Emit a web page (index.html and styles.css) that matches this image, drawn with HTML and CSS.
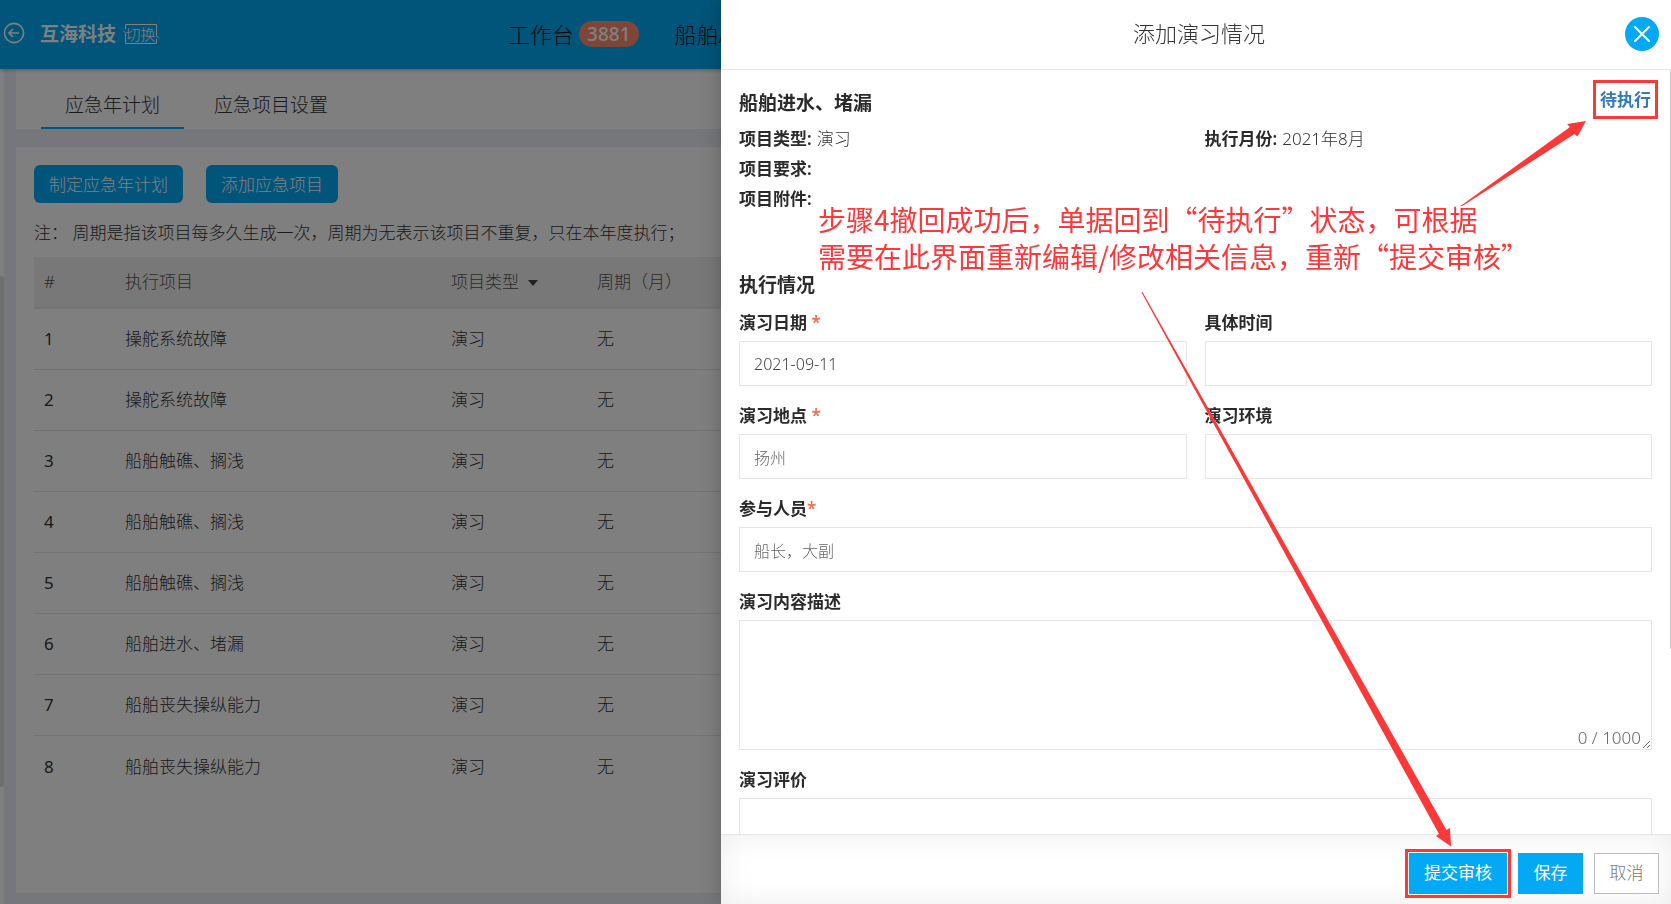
FILE: index.html
```html
<!DOCTYPE html>
<html lang="zh-CN">
<head>
<meta charset="utf-8">
<title>添加演习情况</title>
<link rel="stylesheet" href="styles.css">
</head>
<body>
<div class="app">
  <header class="topbar">
    <a class="back" href="#" aria-label="返回">
      <svg width="22" height="22" viewBox="0 0 22 22" fill="none" stroke="currentColor" stroke-width="1.6"><circle cx="11" cy="11" r="9.6"/><path d="M16 11H6.5M10 7l-4 4 4 4"/></svg>
    </a>
    <strong class="brand">互海科技</strong>
    <button class="switch" type="button">
      <svg width="38" height="22" viewBox="0 0 38 22" fill="none" stroke="currentColor" stroke-width="1"><path d="M2.500 6V1.500H33.500V13L36 15.500M33.500 16V20.500H2.500V10L0 7.500"/></svg>
      <span>切换</span>
    </button>
    <nav class="nav">
      <a href="#">工作台 <span class="badge">3881</span></a>
      <a href="#">船舶AIS</a>
    </nav>
  </header>
  <main class="main">
    <div class="rail"><div class="rail-thumb"></div></div>
    <div class="content">
      <nav class="tabs">
        <a class="tab active" href="#">应急年计划</a>
        <a class="tab" href="#">应急项目设置</a>
      </nav>
      <section class="card">
        <div class="actions">
          <button type="button">制定应急年计划</button>
          <button type="button">添加应急项目</button>
        </div>
        <p class="note">注： 周期是指该项目每多久生成一次，周期为无表示该项目不重复，只在本年度执行；</p>
        <table class="plan">
          <colgroup><col class="c-no"><col class="c-name"><col class="c-type"><col></colgroup>
          <thead><tr><th>#</th><th>执行项目</th><th>项目类型 <span class="caret"></span></th><th>周期（月）</th></tr></thead>
          <tbody>
            <tr><td>1</td><td>操舵系统故障</td><td>演习</td><td>无</td></tr>
            <tr><td>2</td><td>操舵系统故障</td><td>演习</td><td>无</td></tr>
            <tr><td>3</td><td>船舶触礁、搁浅</td><td>演习</td><td>无</td></tr>
            <tr><td>4</td><td>船舶触礁、搁浅</td><td>演习</td><td>无</td></tr>
            <tr><td>5</td><td>船舶触礁、搁浅</td><td>演习</td><td>无</td></tr>
            <tr><td>6</td><td>船舶进水、堵漏</td><td>演习</td><td>无</td></tr>
            <tr><td>7</td><td>船舶丧失操纵能力</td><td>演习</td><td>无</td></tr>
            <tr><td>8</td><td>船舶丧失操纵能力</td><td>演习</td><td>无</td></tr>
          </tbody>
        </table>
      </section>
    </div>
  </main>
</div>
<div class="mask"></div>
<aside class="drawer">
  <header class="drawer-head">
    <h1>添加演习情况</h1>
    <button class="close" type="button" aria-label="关闭">
      <svg width="18" height="18" viewBox="0 0 18 18" fill="none" stroke="currentColor" stroke-width="2" stroke-linecap="round"><path d="M2 2L16 16M16 2L2 16"/></svg>
    </button>
  </header>
  <form class="drawer-body" id="drill">
    <div class="title-row">
      <h2>船舶进水、堵漏</h2>
      <span class="status">待执行</span>
    </div>
    <dl class="info">
      <div><dt>项目类型:</dt><dd>演习</dd></div>
      <div><dt>执行月份:</dt><dd>2021年8月</dd></div>
      <div class="wide"><dt>项目要求:</dt></div>
      <div class="wide"><dt>项目附件:</dt></div>
    </dl>
    <h2 class="section">执行情况</h2>
    <div class="fields">
      <div class="field"><label for="date">演习日期 <i>*</i></label><input id="date" class="dark" value="2021-09-11"></div>
      <div class="field"><label for="time">具体时间</label><input id="time"></div>
      <div class="field"><label for="place">演习地点 <i>*</i></label><input id="place" value="扬州"></div>
      <div class="field"><label for="env">演习环境</label><input id="env"></div>
      <div class="field wide"><label for="people">参与人员<i>*</i></label><input id="people" value="船长，大副"></div>
      <div class="field wide"><label for="desc">演习内容描述</label>
        <div class="area"><textarea id="desc"></textarea><span class="count">0 / 1000</span></div></div>
      <div class="field wide"><label for="review">演习评价</label>
        <div class="area"><textarea id="review"></textarea></div></div>
    </div>
  </form>
  <div class="scroll-thumb"></div>
  <footer class="drawer-foot">
    <button class="primary marked" type="submit" form="drill">提交审核</button>
    <button class="primary" type="button">保存</button>
    <button class="plain" type="button">取消</button>
  </footer>
  <div class="callout">
    <p>步骤4撤回成功后，单据回到“待执行”状态，可根据<br>需要在此界面重新编辑/修改相关信息，重新“提交审核”</p>
  </div>
  <svg class="arrows" width="950" height="904" viewBox="721 0 950 904" fill="#fc3938" aria-hidden="true">
    <path d="M1460.500 206L1570 127L1567 124L1586 121L1577.500 136.500L1574.500 134L1461.500 206.500Z"/>
    <path d="M1141.500 292.500L1142.500 292L1446.500 830L1450 828L1451 846.500L1436 836L1439 834Z"/>
  </svg>
</aside>
</body>
</html>
```
FILE: styles.css
```css
* { box-sizing: border-box; }
html, body { height: 100%; }
body {
  margin: 0;
  overflow: hidden;
  font: 300 17px/24px "Noto Sans", "Noto Sans CJK SC", sans-serif;
  color: #333;
}
h1, h2, p, dl, dd { margin: 0; }
a { color: inherit; text-decoration: none; }
button, input, textarea { font: inherit; color: inherit; }
button { border: 0; padding: 0; background: none; white-space: nowrap; }

.app { display: flex; flex-direction: column; height: 100%; background: #eceff4; }
.topbar {
  display: flex;
  align-items: center;
  height: 69px;
  flex: none;
  padding: 0 3px 2px;
  background: #03a9f4;
  box-shadow: 0 1px 4px rgba(0, 0, 0, .3);
  z-index: 1;
}
.back { display: flex; color: #fff; margin-right: 15px; padding-bottom: 2px; }
.brand { font-size: 19px; font-weight: 700; color: #fff; margin-right: 7px; }
.switch { position: relative; width: 38px; height: 22px; padding-right: 3px; color: #fff; font-size: 15px; line-height: 22px; }
.switch svg { position: absolute; inset: 0; }
.nav { display: flex; gap: 36px; margin-left: 347px; font-size: 22px; font-weight: 300; color: #111; }
.nav a { display: flex; align-items: center; gap: 5px; white-space: nowrap; }
.badge {
  padding: 0 8px;
  border-radius: 13px;
  background: #ff8d6f;
  color: #fff;
  font-size: 19px;
  font-weight: 500;
  line-height: 26px;
}

.main { display: flex; flex: 1; min-height: 0; }
.rail { width: 4px; padding-top: 207px; background: #fff; }
.rail-thumb { height: 511px; border-radius: 0 3px 3px 0; background: #ddd; }
.content { display: flex; flex-direction: column; flex: 1; gap: 18px; padding: 0 12px 11px; }
.tabs { display: flex; gap: 6px; height: 60px; flex: none; padding: 0 25px; background: #fff; }
.tab { padding: 12px 24px 0; font-size: 19px; line-height: 48px; }
.active { border-bottom: 2px solid #03a9f4; }
.card { flex: 1; padding: 18px; background: #fff; }
.actions { display: flex; gap: 23px; }
.actions button { height: 38px; padding: 1px 15px 0; border-radius: 6px; background: #03a9f4; color: #fff; }
.note { padding: 18px 0 12px; }
.plan { width: 100%; table-layout: fixed; border-collapse: separate; border-spacing: 0; }
.c-no { width: 81px; }
.c-name { width: 326px; }
.c-type { width: 146px; }
.plan th { height: 52px; padding: 0 10px; background: #f0f0f0; border-bottom: 2px solid #e6e6e6; text-align: left; font-weight: 300; color: #555; }
.plan td { height: 61px; padding: 0 10px; border-bottom: 1px solid #e6e6e6; }
.plan td:first-child { font-weight: 400; }
.plan tr:last-child td { border-bottom: 0; }
.caret { display: inline-block; margin: 0 5px 2px; border: 5px solid transparent; border-top: 6px solid #444; border-bottom: 0; }

.mask { position: fixed; inset: 0; z-index: 2; background: rgba(0, 0, 0, .5); }
.drawer {
  position: fixed;
  top: 0;
  right: 0;
  bottom: 0;
  z-index: 3;
  width: 56.85%;
  display: flex;
  flex-direction: column;
  background: #fff;
  box-shadow: 0 0 20px rgba(0, 0, 0, .25);
}
.drawer-head { display: flex; align-items: center; height: 70px; flex: none; padding: 0 12px 2px 52px; border-bottom: 1px solid #e4e5e7; }
.drawer-head h1 { flex: 1; padding-bottom: 2px; text-align: center; font-size: 22px; font-weight: 300; line-height: 32px; }
.close { display: flex; align-items: center; justify-content: center; width: 34px; height: 34px; border-radius: 50%; background: #03a9f4; color: #fff; }

.drawer-body { flex: 1; min-height: 0; overflow: hidden; padding: 10px 19px 0 18px; }
.scroll-thumb { position: absolute; top: 70px; right: 0; width: 1px; height: 64%; background: #ccc; }
.title-row { display: flex; align-items: flex-start; justify-content: space-between; margin-right: -6px; }
h2 { font-size: 19px; font-weight: 600; line-height: 28px; color: #2b2b2b; }
.title-row h2 { padding-top: 9px; }
.status { padding: 5px 4px 4px; border: 3px solid #fc3938; font-weight: 600; color: #337ab7; }
.info { display: grid; grid-template-columns: 1fr 1fr; column-gap: 18px; line-height: 30px; padding-top: 5px; }
.info div { display: flex; gap: 5px; }
.wide { grid-column: 1 / -1; }
.info dt { font-weight: 600; color: #2b2b2b; }
.section { margin: 57px 0 12px; }
.fields { display: grid; grid-template-columns: 1fr 1fr; gap: 18px; }
.field { display: flex; flex-direction: column; gap: 6px; }
.field label { font-weight: 600; color: #2b2b2b; }
.field i { font-style: normal; color: #ed6f4d; }
.field input, .field textarea { width: 100%; border: 1px solid #e4e5e7; border-radius: 0; outline: 0; background: #fff; color: #666; }
.field input { height: 45px; padding: 0 14px; font-size: 16px; }
.field .dark { color: #444; font-weight: 300; }
.area { position: relative; display: flex; }
.field textarea { height: 130px; padding: 10px 14px; resize: vertical; }
.count { position: absolute; right: 11px; bottom: 0; color: #666; font-weight: 300; }

.drawer-foot {
  display: flex;
  justify-content: flex-end;
  align-items: center;
  gap: 11px;
  height: 70px;
  flex: none;
  padding: 7px 12px 0;
  border-top: 1px solid #e4e5e7;
  background: #fff;
  box-shadow: inset 0 0 30px rgba(0, 0, 0, .08);
}
.drawer-foot button { min-width: 65px; height: 41px; padding: 0 15px; }
.primary { background: #03a9f4; color: #fff; font-weight: 400; }
.marked { outline: 3px solid #fc3938; outline-offset: 1px; box-shadow: 0 0 0 1px #fff; }
.drawer-foot .plain { padding: 0 14px; border: 1px solid #bbb; background: #fff; color: #777; }

.callout {
  position: absolute;
  top: 201px;
  left: 97px;
  font: 400 28px/37px "Noto Sans CJK SC", sans-serif;
  color: #fc3938;
  white-space: nowrap;
}
.arrows { position: absolute; top: 0; right: 0; pointer-events: none; }
```
